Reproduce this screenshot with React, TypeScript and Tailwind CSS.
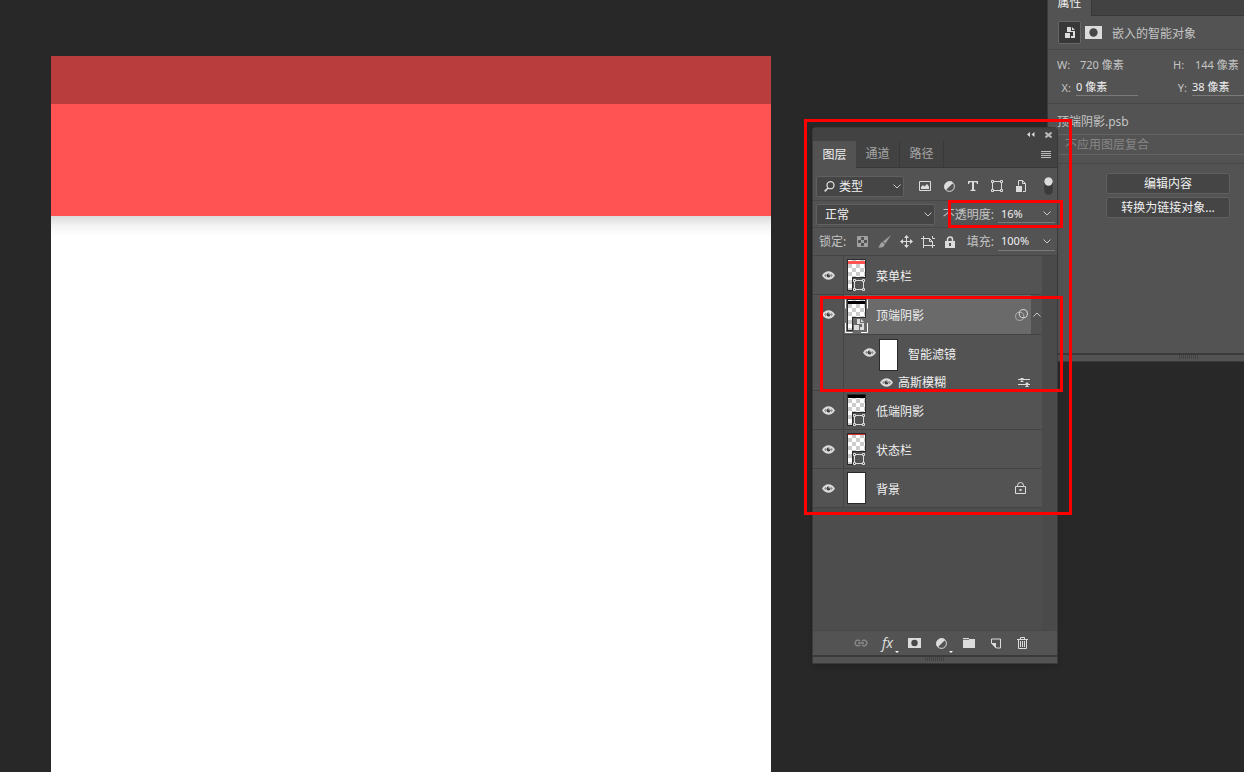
import { useId, useState, type ReactNode } from "react";

const CHROME = "#dcdcdc";

interface IconProps {
  w?: number;
  h?: number;
  className?: string;
  children: ReactNode;
}

function Icon({ w = 13, h = 13, className, children }: IconProps) {
  return (
    <svg
      width={w}
      height={h}
      viewBox={`0 0 ${w} ${h}`}
      fill="none"
      stroke="currentColor"
      aria-hidden="true"
      className={className ?? "text-[#dcdcdc]"}
    >
      {children}
    </svg>
  );
}

function Chevron({ up = false }: { up?: boolean }) {
  return (
    <Icon w={8} h={5} className="shrink-0 text-[#c8c8c8]">
      <path d={up ? "M.5 4.500 4 1l3.500 3.500" : "M.5.5 4 4 7.500.5"} />
    </Icon>
  );
}

function EyeIcon() {
  return (
    <Icon w={13} h={9}>
      <path d="M0 4.500C2 1.500 4 .2 6.500.2S11 1.500 13 4.500C11 7.500 9 8.800 6.500 8.800S2 7.500 0 4.500Z" fill={CHROME} stroke="none" />
      <path d="M2.300 4.500c.5-.8 1-1.300 1.500-1.700v3.400c-.5-.4-1-.9-1.500-1.700ZM10.700 4.500c-.5-.8-1-1.300-1.500-1.700v3.400c.5-.4 1-.9 1.500-1.700Z" fill="#7a7a7a" stroke="none" />
      <circle cx="6.500" cy="4.500" r="2" fill="#3e3e3e" stroke="none" />
      <circle cx="7.200" cy="3.800" r=".7" fill={CHROME} stroke="none" />
    </Icon>
  );
}

function AdjustIcon() {
  return (
    <Icon w={11} h={11}>
      <circle cx="5.500" cy="5.500" r="4.900" />
      <path d="M1.700 9.300A5.400 5.400 0 0 1 9.300 1.700Z" fill="currentColor" stroke="none" />
    </Icon>
  );
}

function MaskIcon({ w, h }: { w: number; h: number }) {
  return (
    <Icon w={w} h={h}>
      <rect width={w} height={h} fill={CHROME} stroke="none" />
      <circle cx={w / 2} cy={h / 2} r={h * 0.32} fill="#484848" stroke="none" />
    </Icon>
  );
}

const SHAPE_PATH =
  "M3 1.500h6M3 10.500h6M1.500 3v6M10.500 3v6M.5.5h2v2h-2zM9.500.5h2v2h-2zM.5 9.500h2v2h-2zM9.500 9.500h2v2h-2z";

type ThumbKind = "shape" | "smart" | "plain";

interface ThumbProps {
  kind: ThumbKind;
  band?: { y: number; h: number; fill: string };
  selected?: boolean;
}

function Thumbnail({ kind, band, selected = false }: ThumbProps) {
  const id = useId();
  return (
    <svg width="19" height="32" viewBox="0 0 19 32" className="shrink-0 overflow-visible" aria-hidden="true">
      <defs>
        <pattern id={id} x="1" y="1" width="8" height="8" patternUnits="userSpaceOnUse">
          <path d="M0 0h8v8H0z" fill="#fff" />
          <path d="M4 0h4v4H4zM0 4h4v4H0z" fill="#ccc" />
        </pattern>
      </defs>
      <path d="M0 0h19v32H0z" fill="#2b2b2b" />
      <path d="M1 1h17v30H1z" fill={kind === "plain" ? "#fff" : `url(#${id})`} />
      {band && <rect x="1" y={band.y} width="17" height={band.h} fill={band.fill} />}
      {kind !== "plain" && (
        <>
          <path d="M5 18h14v1H6v13H5z" fill="#2b2b2b" />
          <path d="M6 19h14v13H6z" fill={selected ? "#6a6a6a" : "#535353"} />
          <g transform="translate(6 20)" fill="none" stroke={CHROME}>
            {kind === "shape" ? (
              <path d={SHAPE_PATH} />
            ) : (
              <>
                <path d="M1 6h5v5H1z" fill={CHROME} stroke="none" />
                <path d="M4 5V0h3v4h4v7H7V8h2V5z" fill={CHROME} stroke="none" />
                <path d="M8 0l3 3H8z" fill={CHROME} stroke="none" />
              </>
            )}
          </g>
        </>
      )}
      {selected && (
        <path
          d="M-1.500 9.500v-9M20.500.5v9M-1.500 24v9.500h7M14 33.500h6.500V24"
          fill="none"
          stroke="#fff"
        />
      )}
    </svg>
  );
}

function Grip() {
  return (
    <Icon w={20} h={4} className="text-[#434343]">
      <path d="M.5 0v4M2.500 0v4M4.500 0v4M6.500 0v4M8.500 0v4M10.500 0v4M12.500 0v4M14.500 0v4M16.500 0v4M18.500 0v4" />
    </Icon>
  );
}

interface ToolButtonProps {
  label: string;
  className: string;
  children: ReactNode;
}

function ToolButton({ label, className, children }: ToolButtonProps) {
  return (
    <button type="button" aria-label={label} className={`flex h-5 shrink-0 items-center justify-center ${className}`}>
      {children}
    </button>
  );
}

function EyeToggle({ label, className }: { label: string; className: string }) {
  const [visible, setVisible] = useState(true);
  return (
    <button
      type="button"
      aria-label={label}
      aria-pressed={visible}
      onClick={() => setVisible(!visible)}
      className={`flex shrink-0 items-center justify-center ${className}`}
    >
      {visible && <EyeIcon />}
    </button>
  );
}

/** Percent field with an underline and a drop arrow. */
function PercentField({ id, label, initial }: { id: string; label: string; initial: string }) {
  const [value, setValue] = useState(initial);
  return (
    <div className="ml-auto flex items-center gap-1">
      <label htmlFor={id} className="pt-px text-[#c4c4c4]">
        {label}
      </label>
      <div className="flex h-[18px] w-[57px] items-center border-b border-[#7a7a7a] pr-1 pl-[3px]">
        <input
          id={id}
          value={value}
          onChange={(e) => setValue(e.target.value)}
          className="w-full min-w-0 bg-transparent text-[11px] text-[#f0f0f0] outline-none"
        />
        <Chevron />
      </div>
    </div>
  );
}

interface LayerRowProps {
  name: string;
  thumb: ThumbProps;
  locked?: boolean;
}

function LayerRow({ name, thumb, locked = false }: LayerRowProps) {
  return (
    <li className="flex h-[39px] border-b border-[#444]">
      <EyeToggle label={name} className="w-[30px]" />
      <div className="flex flex-1 items-center gap-[10px] border-l border-[#444] pr-4 pl-[3px]">
        <Thumbnail {...thumb} />
        <span className="flex-1 pt-[3px]">{name}</span>
        {locked && (
          <Icon w={11} h={12}>
            <path d="M.5 4.500h10v7H.5zM2.500 4.500v-1a3 3 0 0 1 6 0v1" />
            <path d="M4.500 7h2v2h-2z" fill="currentColor" stroke="none" />
          </Icon>
        )}
      </div>
    </li>
  );
}

function SmartLayerRow() {
  return (
    <li className="flex h-24 border-b border-[#444]">
      <EyeToggle label="顶端阴影" className="h-[39px] w-[30px]" />
      <div className="flex flex-1 flex-col border-l border-[#444]">
        <div className="flex h-10 shrink-0 border-b border-[#444]">
          <div className="flex flex-1 items-center gap-[10px] bg-[#6a6a6a] pr-[3px] pl-[3px]">
            <Thumbnail kind="smart" band={{ y: 2, h: 3, fill: "#000" }} selected />
            <span className="flex-1 pt-[3px]">顶端阴影</span>
            <Icon w={13} h={12}>
              <circle cx="4.700" cy="7.300" r="4.100" stroke="#b0b0b0" />
              <circle cx="8.300" cy="4.700" r="4.100" />
            </Icon>
          </div>
          <ToolButton label="收起" className="w-[11px] self-center">
            <Chevron up />
          </ToolButton>
        </div>
        <div className="flex h-9 shrink-0 items-center pt-[3px] pl-[17px]">
          <EyeToggle label="智能滤镜" className="mr-px mb-1 h-5 w-[17px]" />
          <Thumbnail kind="plain" />
          <span className="pl-[10px]">智能滤镜</span>
        </div>
        <div className="flex h-5 shrink-0 items-center pt-[2px] pr-3 pl-[34px]">
          <EyeToggle label="高斯模糊" className="h-4 w-[17px]" />
          <span className="flex-1 pt-px pl-[3px]">高斯模糊</span>
          <Icon w={12} h={10}>
            <path d="M0 2.500h12M0 7.500h12" />
            <path d="M4 3l2 2H2zM9 7.500l2 2.500H7zM7 7l2-2 2 2zM2 1h4L4 3z" fill="currentColor" stroke="none" />
          </Icon>
        </div>
      </div>
    </li>
  );
}

function LayersPanel() {
  return (
    <section className="absolute top-[127px] left-[812px] flex h-[537px] w-[246px] flex-col rounded-t border border-[#3a3a3a] bg-[#535353] text-[#f0f0f0] shadow-md">
      <div className="flex h-[13px] shrink-0 items-center justify-end gap-[10px] bg-[#424242] pr-[5px]">
        <button type="button" aria-label="折叠">
          <Icon w={8} h={5}>
            <path d="M3 0v5L0 2.500zM7.500 0v5l-3-2.500z" fill="currentColor" stroke="none" />
          </Icon>
        </button>
        <button type="button" aria-label="关闭">
          <Icon w={7} h={6} className="text-[#b8b8b8]">
            <path d="M.5.5l6 5M6.500.5l-6 5" strokeWidth="2" />
          </Icon>
        </button>
      </div>

      <div role="tablist" className="flex h-[27px] shrink-0 bg-[#424242] text-[#a6a6a6]">
        <button role="tab" aria-selected="true" className="w-[43px] bg-[#535353] text-[#f0f0f0]">
          图层
        </button>
        <button role="tab" aria-selected="false" className="w-[44px] border-r border-b border-[#383838]">
          通道
        </button>
        <button role="tab" aria-selected="false" className="w-[44px] border-r border-b border-[#383838]">
          路径
        </button>
        <div className="flex flex-1 items-center justify-end border-b border-[#383838] pr-[6px]">
          <button type="button" aria-label="面板菜单">
            <Icon w={10} h={7} className="text-[#bdbdbd]">
              <path d="M0 .5h10M0 2.500h10M0 4.500h10M0 6.500h10" />
            </Icon>
          </button>
        </div>
      </div>

      <div className="flex h-[33px] shrink-0 items-center border-b border-[#474747] pt-1 pr-[3px] pl-[3px]">
        <div className="mr-[9px] flex h-[21px] w-[88px] shrink-0 items-center gap-1 rounded-xs border border-[#606060] bg-[#454545] pr-[2px] pl-[7px]">
          <Icon w={11} h={11} className="shrink-0 text-[#dcdcdc]">
            <circle cx="6.500" cy="4.200" r="3.500" strokeWidth="1.300" />
            <path d="M4 7 .7 10.300" strokeWidth="1.700" />
          </Icon>
          <select aria-label="类型" className="w-full min-w-0 appearance-none bg-transparent pt-[2px] outline-none">
            <option>类型</option>
          </select>
          <Chevron />
        </div>
        <ToolButton label="像素图层" className="w-6">
          <Icon w={12} h={10}>
            <path d="M.5.5h11v9H.5z" />
            <path d="M2 8V6l2-2 1.500 1.500L8 3l2 2.500V8z" fill="currentColor" stroke="none" />
          </Icon>
        </ToolButton>
        <ToolButton label="调整图层" className="w-6">
          <AdjustIcon />
        </ToolButton>
        <ToolButton label="文字图层" className="w-6">
          <Icon w={10} h={10}>
            <path d="M0 0h10v3H9L8.300 1.300H6v7.200l1.500.5v1h-5V9L4 8.500V1.300H1.700L1 3H0z" fill="currentColor" stroke="none" />
          </Icon>
        </ToolButton>
        <ToolButton label="形状图层" className="w-6">
          <Icon w={12} h={12}>
            <path d={SHAPE_PATH} />
          </Icon>
        </ToolButton>
        <ToolButton label="智能对象" className="w-6">
          <Icon w={10} h={12}>
            <path d="M0 6h6v6H0z" fill="currentColor" stroke="none" />
            <path d="M2.500 5.500v-5h4l3 3v8H7M6.500.5v3h3" />
          </Icon>
        </ToolButton>
        <ToolButton label="图层过滤" className="ml-auto w-[11px]">
          <Icon w={9} h={18}>
            <rect x=".5" y=".5" width="8" height="17" rx="4" fill="#3a3a3a" stroke="#404040" />
            <circle cx="4.500" cy="4.500" r="4.200" fill={CHROME} stroke="none" />
          </Icon>
        </ToolButton>
      </div>

      <div className="flex h-[27px] shrink-0 items-center border-b border-[#474747] pr-[2px] pl-[3px]">
        <div className="flex h-[21px] w-[119px] shrink-0 items-center rounded-xs border border-[#606060] bg-[#454545] pr-[2px] pl-2">
          <select aria-label="混合模式" className="w-full min-w-0 appearance-none bg-transparent pt-px outline-none">
            <option>正常</option>
          </select>
          <Chevron />
        </div>
        <PercentField id="opacity" label="不透明度:" initial="16%" />
      </div>

      <div className="flex h-7 shrink-0 items-center border-b border-[#444] pr-[2px] pl-[6px]">
        <span className="w-8 shrink-0 text-[#c4c4c4]">锁定:</span>
        <ToolButton label="锁定透明像素" className="w-[22px]">
          <Icon w={11} h={11} className="text-[#a0a0a0]">
            <path d="M.5.5h10v10H.5z" />
            <path d="M1 1h3v3H1zM7 1h3v3H7zM4 4h3v3H4zM1 7h3v3H1zM7 7h3v3H7z" fill="currentColor" stroke="none" />
          </Icon>
        </ToolButton>
        <ToolButton label="锁定图像像素" className="w-[22px]">
          <Icon w={13} h={13} className="text-[#a0a0a0]">
            <path d="M13 0 7.500 8.500 5 6.500zM4.500 7l2.300 2C6.500 12 4 13 0 12.500 2 11.500 1.500 8 4.500 7z" fill="currentColor" stroke="none" />
          </Icon>
        </ToolButton>
        <ToolButton label="锁定位置" className="w-[22px]">
          <Icon>
            <path d="M6.500 1.500v10M1.500 6.500h10" />
            <path d="M6.500 0 9 3H4zM6.500 13 9 10H4zM0 6.500 3 4v5zM13 6.500 10 4v5z" fill="currentColor" stroke="none" />
          </Icon>
        </ToolButton>
        <ToolButton label="防止嵌套" className="w-[22px]">
          <Icon w={14} h={12}>
            <path d="M0 2.500h8.500l3 3v6.500M2.500 0v9.500H14M11.500 0v2.500H14M2.500 9.500V12M8.500 2.500v3h3" />
          </Icon>
        </ToolButton>
        <ToolButton label="锁定全部" className="w-[22px]">
          <Icon w={10} h={12}>
            <path d="M2.500 5V3.500a2.500 2.500 0 0 1 5 0V5" strokeWidth="1.500" />
            <path d="M0 5h10v7H0zM4 7v3h2V7z" fill="currentColor" fillRule="evenodd" stroke="none" />
          </Icon>
        </ToolButton>
        <PercentField id="fill" label="填充:" initial="100%" />
      </div>

      <div className="flex min-h-0 flex-1 bg-[#4d4d4d]">
        <ul className="min-w-0 flex-1 self-start bg-[#535353]">
          <LayerRow name="菜单栏" thumb={{ kind: "shape", band: { y: 2, h: 3, fill: "#ff5353" } }} />
          <SmartLayerRow />
          <LayerRow name="低端阴影" thumb={{ kind: "shape", band: { y: 1, h: 3, fill: "#000" } }} />
          <LayerRow name="状态栏" thumb={{ kind: "shape", band: { y: 1, h: 1, fill: "#d32f2f" } }} />
          <LayerRow name="背景" thumb={{ kind: "plain" }} locked />
        </ul>
        <div className="w-[15px] shrink-0 bg-[#4a4a4a]" />
      </div>

      <div className="flex h-[25px] shrink-0 items-center border-t border-[#474747] pl-[34px]">
        <ToolButton label="链接图层" className="w-[27px]">
          <Icon w={14} h={8} className="text-[#8c8c8c]">
            <path d="M6 2.200A2.800 2.800 0 1 0 6 5.800M8 2.200A2.800 2.800 0 1 1 8 5.800M4 4h6" strokeWidth="1.300" />
          </Icon>
        </ToolButton>
        <button type="button" className="relative h-5 w-[27px] text-sm leading-5 text-[#dcdcdc] italic">
          fx
          <span className="absolute right-[2px] bottom-0 border-x-2 border-t-2 border-x-transparent border-t-white" />
        </button>
        <ToolButton label="添加蒙版" className="w-[27px]">
          <MaskIcon w={13} h={10} />
        </ToolButton>
        <ToolButton label="新建调整图层" className="relative w-[27px]">
          <AdjustIcon />
          <span className="absolute right-[2px] bottom-0 border-x-2 border-t-2 border-x-transparent border-t-white" />
        </ToolButton>
        <ToolButton label="新建组" className="w-[27px]">
          <Icon w={12} h={10}>
            <path d="M0 0h6v1h6v9H0z" fill="currentColor" stroke="none" />
            <path d="M0 1.500h6" stroke="#777" />
          </Icon>
        </ToolButton>
        <ToolButton label="新建图层" className="w-[27px]">
          <Icon w={10} h={11}>
            <path d="M.5 5V1h9v9H5.500z" />
            <path d="M0 5h5v5.500z" fill="currentColor" stroke="none" />
          </Icon>
        </ToolButton>
        <ToolButton label="删除图层" className="w-[27px]">
          <Icon w={11} h={12}>
            <path d="M0 2.500h11M3.500 2V.5h4V2M1.500 3v8.500h8V3M3.500 4v6M5.500 4v6M7.500 4v6" />
          </Icon>
        </ToolButton>
      </div>
      <div className="flex h-2 shrink-0 justify-center border-t-2 border-[#3a3a3a]">
        <Grip />
      </div>
    </section>
  );
}

interface MeasureProps {
  id: string;
  label: string;
  value: string;
}

function EditableMeasure({ id, label, value }: MeasureProps) {
  const [text, setText] = useState(value);
  return (
    <div className="flex w-[116px] shrink-0 items-center gap-[5px]">
      <label htmlFor={id} className="w-[14px] shrink-0 text-right">
        {label}
      </label>
      <input
        id={id}
        value={text}
        onChange={(e) => setText(e.target.value)}
        className="h-4 w-[62px] border-b border-[#7a7a7a] bg-transparent text-[#f0f0f0] outline-none"
      />
    </div>
  );
}

function PropertiesPanel() {
  return (
    <section className="absolute -top-3 right-0 flex h-[374px] w-[197px] flex-col overflow-hidden border-b border-l border-[#3a3a3a] bg-[#535353] text-[#c4c4c4]">
      <div role="tablist" className="flex h-7 shrink-0 bg-[#424242]">
        <button role="tab" aria-selected="true" className="w-[43px] bg-[#535353] pt-px text-[#f0f0f0]">
          属性
        </button>
        <div className="flex-1 border-b border-l border-[#383838]" />
      </div>

      <div className="flex h-[34px] shrink-0 items-center border-b border-[#474747] pl-[10px]">
        <button
          type="button"
          aria-label="智能对象"
          className="flex size-[23px] items-center justify-center rounded-xs border border-[#666] bg-[#383838]"
        >
          <Icon w={10} h={12}>
            <path d="M0 6h5v5H0zM2 5V0h4v4h4v7H6V9h2V5z" fill="currentColor" stroke="none" />
            <path d="M7 0l3 3H7z" fill="currentColor" stroke="none" />
          </Icon>
        </button>
        <button type="button" aria-label="蒙版" className="ml-1 mr-[10px]">
          <MaskIcon w={17} h={13} />
        </button>
        <span className="pt-[3px]">嵌入的智能对象</span>
      </div>

      <div className="h-[54px] shrink-0 border-b border-[#474747] pt-[3px] pl-[9px] text-[11px]">
        <div className="flex h-[23px] items-center">
          <div className="flex w-[116px] shrink-0 gap-[9px]">
            <span className="w-[14px]">W:</span>
            <span>720 像素</span>
          </div>
          <div className="flex w-[116px] shrink-0 gap-2">
            <span className="w-[14px]">H:</span>
            <span>144 像素</span>
          </div>
        </div>
        <div className="flex h-[23px] items-center">
          <EditableMeasure id="pos-x" label="X:" value="0 像素" />
          <EditableMeasure id="pos-y" label="Y:" value="38 像素" />
        </div>
      </div>

      <div className="flex h-[31px] shrink-0 items-center border-b border-[#646464] pt-[5px] pl-[9px]">顶端阴影.psb</div>
      <div className="h-5 shrink-0 border-b border-[#646464] pl-[17px]">
        <select
          aria-label="图层复合"
          disabled
          className="h-[19px] w-full appearance-none bg-transparent pt-px text-[#868686] opacity-100 outline-none"
        >
          <option>不应用图层复合</option>
        </select>
      </div>

      <div className="mt-2 flex flex-1 flex-col gap-[3px] border-t border-[#474747] pt-[9px] pr-[14px] pl-[58px] text-[#f0f0f0]">
        <button type="button" className="h-[21px] rounded-xs border border-[#606060] bg-[#454545] pt-px">
          编辑内容
        </button>
        <button type="button" className="h-[21px] rounded-xs border border-[#606060] bg-[#454545] pt-px">
          转换为链接对象...
        </button>
      </div>
      <div className="flex h-2 shrink-0 justify-center border-t-2 border-[#3a3a3a] pl-[86px]">
        <Grip />
      </div>
    </section>
  );
}

export default function App() {
  return (
    <main className="relative flex min-h-screen overflow-hidden bg-[#282828] pt-14 pl-[51px] font-['Noto_Sans','Noto_Sans_CJK_SC',sans-serif] text-xs leading-4">
      <div className="flex w-[720px] flex-col bg-white">
        <div className="h-12 bg-[#ba3d3d]" />
        <div className="h-28 bg-[#ff5353]" />
        <div className="h-5 bg-linear-to-b from-[#dcdcdc] via-[#f4f4f4] to-white" />
      </div>

      <PropertiesPanel />
      <LayersPanel />

      {/* callouts over the panels */}
      <div className="pointer-events-none absolute top-[119px] left-[804px] h-[396px] w-[268px] border-3 border-[#ff0000]" />
      <div className="pointer-events-none absolute top-[200px] left-[948px] h-7 w-[115px] border-3 border-[#ff0000]" />
      <div className="pointer-events-none absolute top-[296px] left-[820px] h-[96px] w-[243px] border-3 border-[#ff0000]" />
    </main>
  );
}
